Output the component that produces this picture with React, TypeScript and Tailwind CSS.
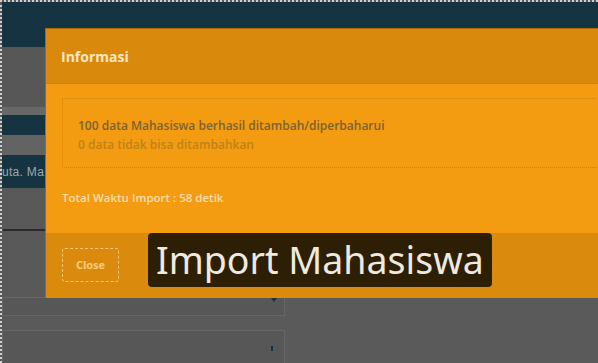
import React from "react";

export default function App() {
  return (
    <div
      className="relative w-[598px] h-[363px] overflow-hidden bg-[#5a5a5a] border-t-2 border-l-2 border-dotted border-[#cfcfcf]"
      style={{ fontFamily: '"Open Sans", "Noto Sans", sans-serif' }}
    >
      {/* background page */}
      <div className="flex flex-col w-full">
        <div className="h-[45px] bg-[#163341]" />
        <div className="h-[60px] bg-[#575757]" />
        <div className="h-[8px] bg-[#686868]" />
        <div className="h-[20px] bg-[#163341]" />
        <div className="h-[20px] bg-[#636363]" />
        <div className="h-[33px] bg-[#163341] flex items-center">
          <span className="text-[12px] text-[#9aa7ad] tracking-wide" style={{ fontFamily: '"Liberation Sans", sans-serif' }}>
            uta. Ma
          </span>
        </div>
        <div className="h-[109px] bg-[#595959] flex flex-col">
          <div className="mt-[41px] ml-[1px] w-[42px] h-[2px] bg-[#2a2a2a]" />
        </div>
        <div className="h-[19px] w-[283px] border border-[#666] bg-[#575757] relative">
          <div className="absolute left-[268px] top-0 w-0 h-0 border-l-[3px] border-r-[3px] border-t-[4px] border-l-transparent border-r-transparent border-t-[#163341]" />
        </div>
        <div className="h-[14px]" />
        <div className="h-[40px] w-[283px] border border-[#666] bg-[#575757] relative">
          <div className="absolute left-[268px] top-[15px] w-[2px] h-[5px] bg-[#163341]" />
        </div>
      </div>

      {/* modal */}
      <div className="absolute left-[43px] top-[26px] w-[570px] h-[270px] flex flex-col border-l border-t border-[#a86a08]">
        <div className="h-[55px] bg-[#d98a0c] border-b border-dotted border-[#c27a08] flex items-center pl-[15px]">
          <span className="text-[14px] font-bold text-[#fbe6c2]">Informasi</span>
        </div>
        <div className="h-[149px] bg-[#f39c12] flex flex-col px-[16px] pt-[14px]">
          <div className="h-[70px] border border-dotted border-[#d4860c] border-r-0 flex flex-col justify-center pl-[15px] pt-[3px]">
            <div className="text-[12px] font-semibold text-[#7a6233] leading-[19px]">
              100 data Mahasiswa berhasil ditambah/diperbaharui
            </div>
            <div className="text-[12px] font-semibold text-[#bf8217] leading-[19px]">
              0 data tidak bisa ditambahkan
            </div>
          </div>
          <div className="mt-[21px] text-[11.5px] font-semibold text-[#f9ddb0]">
            Total Waktu Import : 58 detik
          </div>
        </div>
        <div className="flex-1 bg-[#da8a0c] flex items-start pl-[16px] pt-[15px]">
          <div className="w-[57px] h-[34px] rounded-[3px] border border-dashed border-[#f8c870] flex items-center justify-center">
            <span className="text-[11px] font-bold text-[#f9cd82]">Close</span>
          </div>
        </div>
      </div>

      {/* caption */}
      <div className="absolute left-[146px] top-[231px] w-[344px] h-[54px] rounded-[4px] bg-[#2d1f05] flex items-center pl-[8px]">
        <span className="text-[37.5px] text-[#efeadf] leading-none" style={{ fontFamily: '"Noto Sans", sans-serif' }}>
          Import Mahasiswa
        </span>
      </div>
    </div>
  );
}
